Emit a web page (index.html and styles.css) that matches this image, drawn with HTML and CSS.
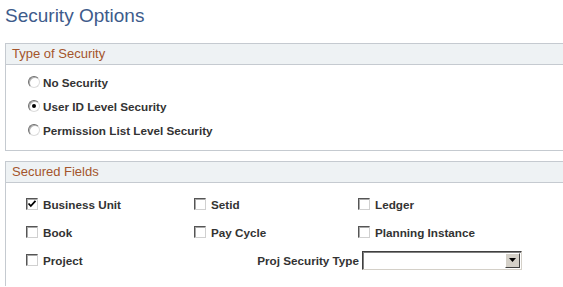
FILE: index.html
```html
<!DOCTYPE html>
<html lang="en">
<head>
    <meta charset="UTF-8">
    <title>Security Options</title>
    <link rel="stylesheet" href="styles.css">
</head>
<body>

    <h1 class="page-title">Security Options</h1>

    <div class="group">
        <div class="group-header">Type of Security</div>
        <div class="group-body radio-list">
            <label class="option"><span class="radio"></span>No Security</label>
            <label class="option"><span class="radio checked"></span>User ID Level Security</label>
            <label class="option"><span class="radio"></span>Permission List Level Security</label>
        </div>
    </div>

    <div class="group">
        <div class="group-header">Secured Fields</div>
        <div class="group-body field-grid">
            <label class="option">
                <span class="checkbox">
                    <svg width="10" height="10" viewBox="0 0 10 10"><path d="M1.5 4.5 L3.8 7 L8.5 1.8" fill="none" stroke="#000" stroke-width="1.8"/></svg>
                </span>Business Unit
            </label>
            <label class="option"><span class="checkbox"></span>Setid</label>
            <label class="option"><span class="checkbox"></span>Ledger</label>

            <label class="option"><span class="checkbox"></span>Book</label>
            <label class="option"><span class="checkbox"></span>Pay Cycle</label>
            <label class="option"><span class="checkbox"></span>Planning Instance</label>

            <label class="option"><span class="checkbox"></span>Project</label>
            <div class="select-field">
                <span class="select-label">Proj Security Type</span>
                <div class="select-box">
                    <span class="select-value"></span>
                    <span class="select-button">
                        <svg width="7" height="4" viewBox="0 0 7 4"><path d="M0 0 H7 L3.5 4 Z" fill="#000"/></svg>
                    </span>
                </div>
            </div>
        </div>
    </div>

</body>
</html>
```

FILE: styles.css
```css
body {
    margin: 0;
    font-family: 'Liberation Sans', Arial, sans-serif;
    background-color: #fff;
    color: #333;
}

.page-title {
    margin: 5px 0 0 5px;
    font-size: 19px;
    line-height: 22px;
    font-weight: normal;
    color: #3e5b8b;
}

.group {
    margin: 16px 0 0 5px;
    border-top: 1px solid #c5cad0;
    border-left: 1px solid #c5cad0;
    border-bottom: 1px solid #c5cad0;
}

.group + .group {
    margin-top: 10px;
}

.group:last-child {
    border-bottom: none;
}

.group-header {
    height: 20px;
    line-height: 20px;
    padding-left: 6px;
    font-size: 13px;
    color: #a4552c;
    background-color: #eef2f4;
    border-bottom: 1px solid #c5cad0;
}

.option {
    display: flex;
    align-items: center;
    font-size: 11.7px;
    font-weight: bold;
    color: #333;
}

.radio-list {
    padding: 5px 0 8px 22px;
}

.radio-list .option {
    height: 24px;
    gap: 3px;
}

.radio {
    width: 10px;
    height: 10px;
    border-radius: 50%;
    border: 1px solid;
    border-color: #6e6e6e #dcdcdc #dcdcdc #6e6e6e;
    box-shadow: inset 1px 1px 0 #b0b0b0;
    display: flex;
    align-items: center;
    justify-content: center;
}

.radio.checked::after {
    content: '';
    width: 4px;
    height: 4px;
    border-radius: 50%;
    background-color: #000;
}

.field-grid {
    display: grid;
    grid-template-columns: 168px 164px auto;
    grid-auto-rows: 28px;
    padding: 7px 0 12px 20px;
}

.field-grid .option {
    gap: 5px;
}

.checkbox {
    width: 10px;
    height: 10px;
    border: 1px solid;
    border-color: #555 #d0d0d0 #d0d0d0 #555;
    box-shadow: inset 1px 1px 0 #a8a8a8;
    background-color: #fff;
    display: flex;
    align-items: center;
    justify-content: center;
}

.select-field {
    grid-column: 2 / 4;
    display: flex;
    align-items: center;
    gap: 3px;
}

.select-label {
    width: 165px;
    text-align: right;
    font-size: 11.7px;
    font-weight: bold;
    color: #333;
}

.select-box {
    display: flex;
    width: 156px;
    height: 15px;
    border: 1px solid;
    border-color: #404040 #d4d0c8 #d4d0c8 #404040;
    box-shadow: inset 1px 1px 0 #808080;
    padding: 1px;
    background-color: #fff;
}

.select-value {
    flex: 1;
}

.select-button {
    width: 15px;
    display: flex;
    align-items: center;
    justify-content: center;
    background-color: #d4d0c8;
    border: 1px solid;
    border-color: #fff #404040 #404040 #fff;
    box-sizing: border-box;
}
```
